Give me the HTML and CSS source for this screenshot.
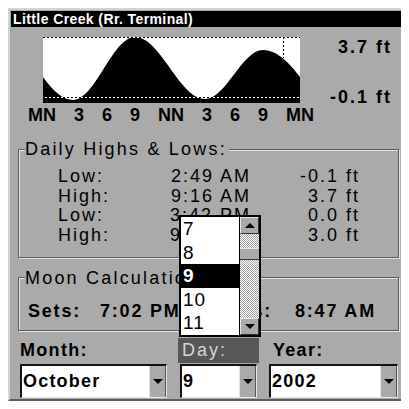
FILE: index.html
```html
<!DOCTYPE html>
<html lang="en">
<head>
  <meta charset="UTF-8" />
  <title>Tide Calculations</title>
  <link rel="stylesheet" href="styles.css">
</head>
<body>

  <div class="screen">
    <div class="title">Little Creek (Rr. Terminal)</div>

    <div class="tide">
      <svg class="tide-graph" viewBox="0 0 257 66" width="257" height="66">
        <rect width="257" height="66" fill="#fff"/>
        <path d="M0,40 C10,54 20,63 30,63 C52.6,63 69.4,0 92,0 C117.5,0 136.5,62 162,62 C183,62 199,13 220,13 C235,13 248,28 257,40 L257,66 L0,66 Z" fill="#000"/>
        <!-- dotted limit lines, dark on white and light on black -->
        <line x1="0" y1="0.5" x2="257" y2="0.5" stroke="#000" stroke-dasharray="2 2"/>
        <line x1="2" y1="0.5" x2="257" y2="0.5" stroke="#fff" stroke-dasharray="2 2"/>
        <line x1="0" y1="60.5" x2="257" y2="60.5" stroke="#000" stroke-dasharray="2 2"/>
        <line x1="2" y1="60.5" x2="257" y2="60.5" stroke="#fff" stroke-dasharray="2 2"/>
        <line x1="240.5" y1="0" x2="240.5" y2="21" stroke="#000" stroke-dasharray="2 2"/>
      </svg>
      <div class="tide-scale">
        <span>3.7 ft</span>
        <span>-0.1 ft</span>
      </div>
    </div>

    <div class="hours">
      <span>MN</span><span>3</span><span>6</span><span>9</span><span>NN</span><span>3</span><span>6</span><span>9</span><span>MN</span>
    </div>

    <fieldset class="group daily">
      <legend>Daily Highs &amp; Lows:</legend>
      <div class="tide-table">
        <span>Low:</span><span class="num">2:49 AM</span><span class="num">-0.1 ft</span>
        <span>High:</span><span class="num">9:16 AM</span><span class="num">3.7 ft</span>
        <span>Low:</span><span class="num">3:42 PM</span><span class="num">0.0 ft</span>
        <span>High:</span><span class="num">9:38 PM</span><span class="num">3.0 ft</span>
      </div>
    </fieldset>

    <fieldset class="group moon">
      <legend>Moon Calculations</legend>
      <div class="moon-row">
        <span>Sets:</span><span>7:02 PM</span><span class="num">Rises:</span><span class="rise">8:47 AM</span>
      </div>
    </fieldset>

    <div class="date-fields">
      <div class="field-label">Month:</div>
      <div class="field-label active">Day:</div>
      <div class="field-label year">Year:</div>

      <div class="select"><span>October</span><i class="drop"></i></div>
      <div class="select day"><span>9</span><i class="drop"></i></div>
      <div class="select"><span>2002</span><i class="drop"></i></div>
    </div>

    <div class="day-list">
      <ul>
        <li>7</li>
        <li>8</li>
        <li class="selected">9</li>
        <li>10</li>
        <li>11</li>
      </ul>
      <div class="scroll">
        <div class="scroll-btn up"></div>
        <div class="scroll-track">
          <div class="scroll-thumb"></div>
        </div>
        <div class="scroll-btn down"></div>
      </div>
    </div>
  </div>

</body>
</html>
```

FILE: styles.css
```css
* {
  box-sizing: border-box;
  margin: 0;
  padding: 0;
}

body {
  margin: 8px;
  background: #fff;
  font-family: 'Liberation Sans', Arial, sans-serif;
  color: #000;
}

.screen {
  position: relative;
  width: 399px;
  padding: 1px;
  background: #aaa;
  border: 2px solid;
  border-color: #d4d4d4 #5c5c5c #5c5c5c #d4d4d4;
}

.title {
  height: 16px;
  padding-left: 2px;
  background: #000;
  color: #fff;
  font-size: 14px;
  font-weight: bold;
  line-height: 16px;
  letter-spacing: 0.4px;
}

/* tide graph */
.tide {
  display: flex;
  height: 66px;
  margin-top: 10px;
}

.tide-graph {
  display: block;
  margin-left: 32px;
}

.tide-scale {
  display: flex;
  flex-direction: column;
  align-items: flex-end;
  margin-left: auto;
  margin-right: 12px;
}

.tide-scale span {
  font-size: 18px;
  font-weight: bold;
  line-height: 20px;
  letter-spacing: 2px;
}

.tide-scale span + span {
  margin-top: 30px;
}

.hours {
  display: flex;
  justify-content: space-between;
  width: 286px;
  margin: 2px 0 0 17px;
  font-size: 18px;
  font-weight: bold;
  line-height: 20px;
}

/* group boxes */
.group {
  margin: 14px 5px 0 7px;
  border: 1px solid #5a5a5a;
  box-shadow: 1px 1px 0 #e4e4e4, inset 1px 1px 0 #e4e4e4;
}

.group legend {
  margin-left: 6px;
  padding-right: 2px;
  background: #aaa;
  font-size: 18px;
  line-height: 20px;
  letter-spacing: 2.2px;
}

.daily {
  padding: 8px 0 11px;
}

.moon {
  margin-top: 10px;
  padding: 13px 0 9px;
}

.tide-table {
  display: grid;
  grid-template-columns: 72px 121px 109px;
  margin-left: 39px;
  font-size: 18px;
  line-height: 19.7px;
  letter-spacing: 2px;
}

.num {
  text-align: right;
}

.moon-row {
  display: grid;
  grid-template-columns: 72px 105px 67px auto;
  margin-left: 9px;
  font-size: 18px;
  font-weight: bold;
  line-height: 20px;
  letter-spacing: 1.8px;
}

.moon-row .rise {
  padding-left: 23px;
}

/* date pickers */
.date-fields {
  display: grid;
  grid-template-columns: 148px 81px 129px;
  grid-template-rows: 25px 34px;
  column-gap: 10px;
  row-gap: 1px;
  margin: 7px 0 0 9px;
}

.field-label {
  font-size: 18px;
  font-weight: bold;
  line-height: 25px;
  letter-spacing: 1.3px;
}

.field-label.active {
  padding-left: 4px;
  background: #575757;
  color: #d6d6d6;
  font-weight: normal;
  letter-spacing: 2px;
}

.field-label.year {
  padding-left: 4px;
}

.select {
  display: flex;
  width: 147px;
  background: #fff;
  border-style: solid;
  border-width: 2px 1px 1px 2px;
  border-color: #111 #e6e6e6 #e6e6e6 #111;
}

.select.day {
  width: 77px;
  margin-left: 2px;
}

.date-fields .select:last-child {
  width: 129px;
}

.select span {
  flex: 1;
  padding-left: 1px;
  font-size: 18px;
  font-weight: bold;
  line-height: 31px;
  letter-spacing: 1.2px;
}

.drop {
  display: flex;
  align-items: center;
  justify-content: center;
  width: 17px;
  background: #aaa;
  border-left: 1px solid #e2e2e2;
  border-right: 1px solid #555;
}

.drop::after,
.scroll-btn.down::after {
  content: '';
  border-left: 5px solid transparent;
  border-right: 5px solid transparent;
  border-top: 5px solid #000;
}

/* open day list */
.day-list {
  position: absolute;
  left: 169px;
  top: 205px;
  display: flex;
  width: 82px;
  height: 122px;
  background: #fff;
  border: 2px solid #000;
}

.day-list ul {
  flex: 1;
  list-style: none;
  overflow: hidden;
}

.day-list li {
  height: 23.6px;
  padding-left: 2px;
  font-size: 19px;
  line-height: 23.6px;
  letter-spacing: 1px;
}

.day-list li.selected {
  background: #000;
  color: #fff;
  font-weight: bold;
}

.scroll {
  display: flex;
  flex-direction: column;
  width: 20px;
  border-left: 1px solid #000;
}

.scroll-btn {
  display: flex;
  align-items: center;
  justify-content: center;
  height: 17px;
  background: #aaa;
  border: 1px solid;
  border-color: #e6e6e6 #333 #333 #e6e6e6;
}

.scroll-btn.up::after {
  content: '';
  border-left: 5px solid transparent;
  border-right: 5px solid transparent;
  border-bottom: 5px solid #000;
}

.scroll-track {
  flex: 1;
  padding-top: 14px;
  background: repeating-conic-gradient(#fff 0 25%, #a4a4a4 0 50%) 0 0 / 2px 2px;
}

.scroll-thumb {
  height: 12px;
  background: #aaa;
  border-top: 1px solid #e6e6e6;
  border-bottom: 1px solid #333;
}
```
